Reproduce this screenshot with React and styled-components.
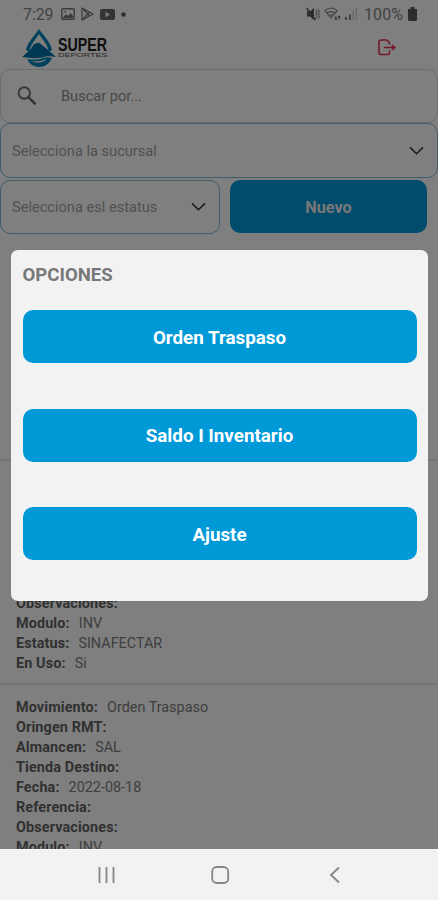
import React from "react";
import styled, { createGlobalStyle } from "styled-components";

const Global = createGlobalStyle`
  *{box-sizing:border-box}
  body{margin:0;background:#fff;font-family:Roboto,"Liberation Sans",sans-serif;overflow:hidden}
`;
const Phone = styled.div`
  width:438px;height:900px;position:relative;overflow:hidden;display:flex;flex-direction:column;background:#fff;
`;
const Screen = styled.div`height:849px;display:flex;flex-direction:column;overflow:hidden;`;
const StatusBar = styled.div`
  height:28px;flex:none;display:flex;justify-content:space-between;align-items:center;
  padding:0 21px 0 23px;color:#868686;font-size:16px;
`;
const Cluster = styled.div`display:flex;align-items:center;height:28px;gap:${p => p.$gap}px;svg{display:block;flex:none}`;
const Clock = styled.span`width:32px;letter-spacing:-.1px;white-space:nowrap;`;
const Percent = styled.span`margin-left:3px;width:40px;letter-spacing:.1px;white-space:nowrap;`;
const Header = styled.header`
  height:41px;flex:none;display:flex;justify-content:space-between;padding:1px 41px 0 20px;
  svg{display:block;overflow:visible}
`;
const Exit = styled.div`padding-top:10px;`;
const Field = styled.div`
  height:${p => p.$h}px;flex:none;width:${p => p.$w || "100%"};border:1.5px solid ${p => p.$line};border-radius:10px;
  display:flex;align-items:center;padding:0 ${p => p.$right || 13}px 0 ${p => p.$left || 11}px;
  color:${p => p.$tone || "#a0a0a6"};font-size:14.6px;margin-bottom:${p => p.$gap || 0}px;
  svg{display:block;flex:none}
`;
const Label = styled.span`flex:1;white-space:nowrap;padding-left:${p => p.$indent || 0}px;`;
const Filters = styled.div`display:flex;height:55px;flex:none;gap:10px;padding-right:10px;`;
const Button = styled.button`
  border:0;border-radius:10px;background:#0099d8;color:${p => p.$ink || "#fff"};font:700 ${p => p.$size}px Roboto,sans-serif;
  height:${p => p.$h}px;width:${p => p.$w || "100%"};padding:2px 0 0;display:block;
`;
const List = styled.div`padding-top:224px;`;
const Record = styled.div`height:224px;border-top:2px solid #ebebeb;padding:12.6px 16px 0;flex:none;`;
const Row = styled.div`
  height:20.1px;line-height:20.1px;display:flex;gap:9px;font-size:14.4px;color:#7c7c7c;white-space:nowrap;
  b{font-weight:700;color:#626262;letter-spacing:.12px}
`;
const Scrim = styled.div`
  position:absolute;inset:0 0 51px;background:rgba(0,0,0,.5);padding:250px 10.5px 0 11px;
`;
const Dialog = styled.section`
  height:351px;border-radius:7px;background:#f2f2f2;padding:12px 11px 0 11.5px;
`;
const Title = styled.h1`
  margin:0 0 22px;height:26px;line-height:26px;font-size:18.6px;font-weight:700;color:#787878;
`;
const Actions = styled.div`display:flex;flex-direction:column;gap:45.5px;`;
const Navigation = styled.nav`
  height:51px;flex:none;background:#f2f2f2;border-top:1px solid #fafafa;
  display:grid;grid-template-columns:20px 20px 20px;column-gap:94px;align-items:center;padding-left:96px;
  svg{display:block}
`;

const Logo = () => (
  <svg width="90" height="40" viewBox="0 0 90 40">
    <path d="M19 0 C14 7 7 14 6 21 L9.5 23 C9.5 17 15 11 19 5 C23 11 28.5 17 28.5 23 L32 21 C31 14 24 7 19 0Z" fill="#0085bd" />
    <path d="M2 28 L10 21 L14 15 L19 13.5 L27 20 L36 28 Q28 26.5 22 28.5 Q14 30 2 28Z" fill="#0073a8" />
    <path d="M7 30 Q14 31 20 30 Q26 27 32 29 Q28 38 19 38 Q11 38 7 30Z" fill="#0085bd" />
    <path d="M11.5 31.5 Q17 33.5 27 30 Q23 34 18 33.8 Q14 34 11.5 31.5Z" fill="#e4e8ea" />
    <text x="38" y="21.5" textLength="49" lengthAdjust="spacingAndGlyphs" fontFamily="Liberation Sans" fontWeight="700" fontSize="18.3" fill="#202020">SUPER</text>
    <text x="38" y="28.3" textLength="49.5" lengthAdjust="spacingAndGlyphs" fontFamily="Liberation Sans" fontSize="6" fill="#505050">DEPORTES</text>
  </svg>
);
const ExitIcon = () => (
  <svg width="19" height="17" viewBox="0 0 19 17" fill="none" stroke="#e43350" strokeWidth="1.6" strokeLinejoin="round" strokeLinecap="round">
    <path d="M11.5 5V3.8L8.7 1H3Q1 1 1 3V13Q1 15.5 3 15.5H9.5Q11.5 15.5 11.5 13.5V12" />
    <path d="M6.5 8.5H17" /><path d="M14.5 6 17.7 8.5 14.5 11Z" fill="#e43350" strokeWidth=".8" />
  </svg>
);
const SearchIcon = () => (
  <svg width="20" height="20" viewBox="0 0 20 20" fill="none" stroke="#6c6c6c">
    <circle cx="7.3" cy="7" r="5.7" strokeWidth="1.9" /><path d="M11.5 11.4 18.5 18.3" strokeWidth="2.6" />
  </svg>
);
const Chevron = () => (
  <svg width="15" height="10" viewBox="0 0 15 10" fill="none" stroke="#343434" strokeWidth="1.5"><path d="M1 1.4 7.5 7.8 14 1.4" /></svg>
);
const ImageIcon = () => (
  <svg width="14" height="12" viewBox="0 0 14 12"><rect x=".8" y=".8" width="12.4" height="10.4" rx="1" fill="none" stroke="#747474" strokeWidth="1.4" /><path d="M2 9.5 5 6 7 8 9.7 5 12 8V10H2Z" fill="#747474" /><circle cx="4.2" cy="3.7" r=".9" fill="#747474" /></svg>
);
const PlayStoreIcon = () => (
  <svg width="13" height="14" viewBox="0 0 13 14" fill="none" stroke="#747474" strokeWidth="1.2" strokeLinejoin="round"><path d="M1 1 12 7 1 13Z" /><path d="M1 1 8.7 9M1 13 8.7 5" /></svg>
);
const VideoIcon = () => (
  <svg width="15" height="11" viewBox="0 0 15 11"><rect width="15" height="11" rx="2" fill="#686868" /><path d="M5.5 2.8 10 5.5 5.5 8.2Z" fill="#f5f5f5" /></svg>
);
const Dot = () => <svg width="5" height="5" viewBox="0 0 5 5"><circle cx="2.5" cy="2.5" r="2.3" fill="#5a5a5a" /></svg>;
const MuteIcon = () => (
  <svg width="14" height="14" viewBox="0 0 14 14"><path d="M1 4.5H4L8 1V13L4 9.5H1Z" fill="#585858" /><path d="M.5 1 9.5 13" stroke="#585858" strokeWidth="1.5" /><path d="M10 2.5 11 4 10 5.5 11 7 10 8.5 11 10 10 11.5M12.5 2.5 13.3 4 12.5 5.5 13.3 7 12.5 8.5 13.3 10 12.5 11.5" fill="none" stroke="#727272" /></svg>
);
const WifiIcon = () => (
  <svg width="17" height="14" viewBox="0 0 17 14" fill="none" stroke="#7a7a7a"><path d="M.8 3.6Q7 -1.6 13.2 3.6L7 11Z" strokeWidth="1.1" strokeLinejoin="round" /><path d="M3 6.2Q7 3 11 6.2M5 8.5Q7 7 9 8.5" strokeWidth="1.2" /><path d="M11.8 9V12.5M10.5 11 11.8 12.7 13 11M15 12.5V9M13.8 10.5 15 8.8 16.3 10.5" stroke="#606060" strokeWidth="1" /></svg>
);
const SignalIcon = () => (
  <svg width="12" height="12" viewBox="0 0 12 12"><path d="M0 9H1.7V12H0ZM4 6.5H5.7V12H4Z" fill="#747474" /><path d="M7.5 3H9V12H7.5ZM10.6 0H12V12H10.6Z" fill="#d0d0d0" /></svg>
);
const BatteryIcon = () => (
  <svg width="9" height="14" viewBox="0 0 9 14"><path d="M2.5 0H6.5V2H9V12.5Q9 14 7.5 14H1.5Q0 14 0 12.5V2H2.5Z" fill="#5a5a5a" /></svg>
);

const makeRecord = () => [
  ["Movimiento:", "Orden Traspaso"], ["Oringen RMT:", ""], ["Almancen:", "SAL"], ["Tienda Destino:", ""],
  ["Fecha:", "2022-08-18"], ["Referencia:", ""], ["Observaciones:", ""], ["Modulo:", "INV"],
  ["Estatus:", "SINAFECTAR"], ["En Uso:", "Si"],
];
const records = [makeRecord(), makeRecord().slice(0, 8)];

export default function App() {
  return (
    <Phone>
      <Global />
      <Screen>
        <StatusBar>
          <Cluster $gap={6}><Clock>7:29</Clock><ImageIcon /><PlayStoreIcon /><VideoIcon /><Dot /></Cluster>
          <Cluster $gap={4}><MuteIcon /><WifiIcon /><SignalIcon /><Percent>100%</Percent><BatteryIcon /></Cluster>
        </StatusBar>
        <Header><Logo /><Exit><ExitIcon /></Exit></Header>
        <Field $h={54} $line="#d2dce7" $left={16} $tone="#8e8e8e">
          <SearchIcon /><Label $indent={24}>Buscar por...</Label>
        </Field>
        <Field $h={55} $line="#84bcd4" $gap={2}><Label>Selecciona la sucursal</Label><Chevron /></Field>
        <Filters>
          <Field $h={54} $w="220px" $line="#84bcd4"><Label>Selecciona esl estatus</Label><Chevron /></Field>
          <Button $h={53} $w="197px" $size={16.2} $ink="#f0f0f0">Nuevo</Button>
        </Filters>
        <List>
          {records.map((rows, i) => (
            <Record key={i}>
              {rows.map(([name, value]) => <Row key={name}><b>{name}</b>{value && <span>{value}</span>}</Row>)}
            </Record>
          ))}
        </List>
      </Screen>
      <Navigation>
        <svg width="20" height="20" viewBox="0 0 20 20" stroke="#868686" strokeWidth="1.8"><path d="M3.5 2V18M10.5 2V18M17.5 2V18" /></svg>
        <svg width="20" height="20" viewBox="0 0 20 20" fill="none" stroke="#868686" strokeWidth="1.8"><rect x="2.2" y="2" width="16" height="16" rx="4.5" /></svg>
        <svg width="20" height="20" viewBox="0 0 20 20" fill="none" stroke="#868686" strokeWidth="1.8"><path d="M15 2.5 7 10 15 17.5" /></svg>
      </Navigation>
      <Scrim>
        <Dialog role="dialog" aria-label="OPCIONES">
          <Title>OPCIONES</Title>
          <Actions>
            <Button $h={53} $size={18.8}>Orden Traspaso</Button>
            <Button $h={53} $size={18.8}>Saldo I Inventario</Button>
            <Button $h={53} $size={18.8}>Ajuste</Button>
          </Actions>
        </Dialog>
      </Scrim>
    </Phone>
  );
}
